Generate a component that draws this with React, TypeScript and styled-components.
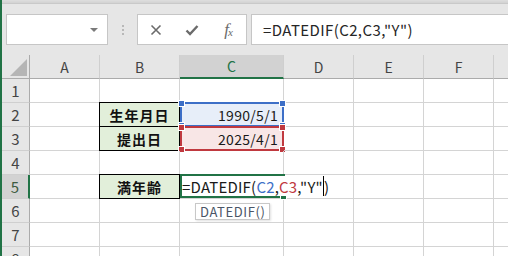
import React from 'react';
import styled, { createGlobalStyle, css } from 'styled-components';

const GlobalStyle = createGlobalStyle`
  html, body {
    margin: 0;
    padding: 0;
    background: #ffffff;
  }
  body {
    width: 508px;
    height: 256px;
    overflow: hidden;
    font-family: "Noto Sans CJK JP", "Noto Sans", sans-serif;
  }
`;

const EXCEL_GREEN = '#217346';
const GRID_LINE = '#d4d4d4';

const Page = styled.div`
  display: flex;
  flex-direction: column;
  height: 256px;
  box-sizing: border-box;
  border-left: 2px solid ${EXCEL_GREEN};
  background: #e6e6e6;
  overflow: hidden;
`;

const Toolbar = styled.div`
  height: 55px;
  flex-shrink: 0;
`;

const TopShade = styled.div`
  height: 3px;
  background: linear-gradient(#dedede, #d2d2d2);
  border-bottom: 1px solid #c9c9c9;
`;

const BarRow = styled.div`
  display: flex;
  align-items: center;
  margin-top: 10px;
  padding-left: 4px;
  height: 31px;
`;

const NameBox = styled.div`
  width: 102px;
  height: 31px;
  box-sizing: border-box;
  background: #ffffff;
  border: 1px solid #c6c6c6;
  display: flex;
  align-items: center;
  justify-content: flex-end;
  padding-right: 9px;
`;

const DropCaret = styled.span`
  width: 0;
  height: 0;
  border-left: 4px solid transparent;
  border-right: 4px solid transparent;
  border-top: 4px solid #7a7a7a;
`;

const Grip = styled.div`
  display: flex;
  flex-direction: column;
  gap: 2px;
  margin: 0 13px 0 14px;
`;

const GripDot = styled.span`
  width: 2px;
  height: 2px;
  background: #b8b8b8;
`;

const FxBox = styled.div`
  width: 110px;
  height: 31px;
  box-sizing: border-box;
  background: #ffffff;
  border: 1px solid #c6c6c6;
  display: grid;
  grid-template-columns: repeat(3, 36px);
  align-items: center;
  justify-items: center;
`;

const FxLabel = styled.span`
  font-family: "Liberation Serif", serif;
  font-style: italic;
  font-size: 17px;
  line-height: 1;
  color: #6b6b6b;
  letter-spacing: -1px;

  sub {
    font-size: 11px;
    vertical-align: -1px;
  }
`;

const FormulaInput = styled.div`
  flex: 1;
  height: 31px;
  margin-left: 4px;
  box-sizing: border-box;
  background: #ffffff;
  border: 1px solid #c6c6c6;
  border-right: none;
  display: flex;
  align-items: center;
  padding-left: 11px;
  font-size: 15px;
  letter-spacing: 0.4px;
  color: #262626;
  white-space: nowrap;
`;

const Sheet = styled.div`
  display: grid;
  grid-template-columns: 28px 70px 80px 104px 70px 70px 70px 70px;
  grid-auto-rows: 24px;
  background: #ffffff;
`;

const Corner = styled.div`
  position: relative;
  background: #e6e6e6;
  border-right: 1px solid #ababab;
  border-bottom: 1px solid #ababab;

  &::after {
    content: '';
    position: absolute;
    right: 2px;
    bottom: 2px;
    width: 0;
    height: 0;
    border-left: 17px solid transparent;
    border-bottom: 17px solid #b5b5b5;
  }
`;

const ColHead = styled.div<{ $active?: boolean }>`
  display: flex;
  align-items: center;
  justify-content: center;
  font-size: 14px;
  color: #444444;
  background: #e6e6e6;
  border-right: 1px solid #cfcfcf;
  border-bottom: 1px solid #ababab;
  box-sizing: border-box;
  ${(p) =>
    p.$active &&
    css`
      background: #d2d2d2;
      color: ${EXCEL_GREEN};
      border-bottom: 2px solid ${EXCEL_GREEN};
    `}
`;

const RowHead = styled.div<{ $active?: boolean }>`
  display: flex;
  align-items: center;
  justify-content: center;
  font-size: 15px;
  color: #444444;
  background: #e6e6e6;
  border-right: 1px solid #ababab;
  border-bottom: 1px solid #cfcfcf;
  box-sizing: border-box;
  ${(p) =>
    p.$active &&
    css`
      background: #d2d2d2;
      color: #3c5a40;
      border-right: 2px solid ${EXCEL_GREEN};
    `}
`;

const Cell = styled.div`
  position: relative;
  box-sizing: border-box;
  border-right: 1px solid ${GRID_LINE};
  border-bottom: 1px solid ${GRID_LINE};
  font-size: 14px;
  color: #1a1a1a;
`;

const LabelCell = styled(Cell)`
  display: flex;
  align-items: center;
  justify-content: center;
  background: #e2efda;
  font-weight: bold;
  font-size: 14px;
  color: #111111;
  letter-spacing: 1px;

  &::after {
    content: '';
    position: absolute;
    top: -1px;
    left: -1px;
    right: -1px;
    bottom: -1px;
    border: 1px solid #000000;
  }
`;

const ValueCell = styled(Cell)<{ $bg: string }>`
  display: flex;
  align-items: center;
  justify-content: flex-end;
  padding-right: 5px;
  letter-spacing: 0.3px;
  background: ${(p) => p.$bg};
`;

const RefFrame = styled.div<{ $tone: string }>`
  position: absolute;
  top: -1px;
  left: 0;
  right: -1px;
  bottom: -1px;
  border: 2px solid ${(p) => p.$tone};
`;

const Handle = styled.span<{ $tone: string; $x: 'left' | 'right'; $y: 'top' | 'bottom' }>`
  position: absolute;
  width: 5px;
  height: 5px;
  background: ${(p) => p.$tone};
  border: 1px solid #ffffff;
  ${(p) => (p.$x === 'left' ? 'left: -4px;' : 'right: -4px;')}
  ${(p) => (p.$y === 'top' ? 'top: -4px;' : 'bottom: -4px;')}
`;

const EditFrame = styled.div`
  position: absolute;
  top: -1px;
  left: 0;
  right: -2px;
  bottom: 0;
  border: 2px solid ${EXCEL_GREEN};
  border-right: none;
  z-index: 2;
`;

const FillHandle = styled.span`
  position: absolute;
  right: -2px;
  bottom: -4px;
  width: 5px;
  height: 5px;
  background: ${EXCEL_GREEN};
  border: 1px solid #ffffff;
`;

const Editor = styled.div`
  position: absolute;
  top: 1px;
  left: 2px;
  width: 152px;
  height: 20px;
  background: #ffffff;
  display: flex;
  align-items: center;
  font-size: 15px;
  letter-spacing: 0.2px;
  color: #1a1a1a;
  white-space: nowrap;
  z-index: 3;
`;

const Ref = styled.span<{ $tone: string }>`
  color: ${(p) => p.$tone};
`;

const TextCaret = styled.span`
  display: inline-block;
  width: 1px;
  height: 20px;
  background: #000000;
  vertical-align: middle;
`;

const Tip = styled.div`
  position: absolute;
  left: 15px;
  top: 28px;
  width: 75px;
  height: 17px;
  box-sizing: border-box;
  background: #ffffff;
  border: 1px solid #c8c8c8;
  box-shadow: 1px 1px 2px rgba(0, 0, 0, 0.12);
  font-size: 13px;
  letter-spacing: 0.6px;
  line-height: 15px;
  padding-left: 4px;
  color: #4a5566;
  white-space: nowrap;
  overflow: hidden;
  z-index: 4;
`;

const COLS = ['A', 'B', 'C', 'D', 'E', 'F', 'G'];
const ROWS = [1, 2, 3, 4, 5, 6, 7, 8];

const BLUE = '#3d6fc7';
const RED = '#c0393f';

const labels: Record<number, string> = { 2: '生年月日', 3: '提出日', 5: '満年齢' };
const values: Record<number, { text: string; tone: string; bg: string }> = {
  2: { text: '1990/5/1', tone: BLUE, bg: '#e7eef9' },
  3: { text: '2025/4/1', tone: RED, bg: '#f8e6e6' },
};

const CloseIcon = () => (
  <svg width="12" height="12" viewBox="0 0 12 12">
    <path d="M1.5 1.5 L10.5 10.5 M10.5 1.5 L1.5 10.5" stroke="#6b6b6b" strokeWidth="1.6" fill="none" />
  </svg>
);

const CheckIcon = () => (
  <svg width="14" height="12" viewBox="0 0 14 12">
    <path d="M1.5 6.5 L5 10 L12.5 2" stroke="#6b6b6b" strokeWidth="2.4" fill="none" />
  </svg>
);

const FORMULA = '=DATEDIF(C2,C3,"Y")';

const renderCell = (row: number, col: string) => {
  const key = `${col}${row}`;
  if (col === 'B' && labels[row]) {
    return <LabelCell key={key}>{labels[row]}</LabelCell>;
  }
  if (col === 'C' && values[row]) {
    const v = values[row];
    return (
      <ValueCell key={key} $bg={v.bg}>
        {v.text}
        <RefFrame $tone={v.tone}>
          <Handle $tone={v.tone} $x="left" $y="top" />
          <Handle $tone={v.tone} $x="right" $y="top" />
          <Handle $tone={v.tone} $x="left" $y="bottom" />
          <Handle $tone={v.tone} $x="right" $y="bottom" />
        </RefFrame>
      </ValueCell>
    );
  }
  if (col === 'C' && row === 5) {
    return (
      <Cell key={key}>
        <EditFrame>
          <FillHandle />
        </EditFrame>
        <Editor>
          =DATEDIF(<Ref $tone={BLUE}>C2</Ref>,<Ref $tone={RED}>C3</Ref>,"Y"
          <TextCaret />)
        </Editor>
        <Tip>DATEDIF()</Tip>
      </Cell>
    );
  }
  return <Cell key={key} />;
};

const App: React.FC = () => {
  return (
    <>
      <GlobalStyle />
      <Page>
        <Toolbar>
          <TopShade />
          <BarRow>
            <NameBox>
              <DropCaret />
            </NameBox>
            <Grip>
              <GripDot />
              <GripDot />
              <GripDot />
            </Grip>
            <FxBox>
              <CloseIcon />
              <CheckIcon />
              <FxLabel>
                f<sub>x</sub>
              </FxLabel>
            </FxBox>
            <FormulaInput>{FORMULA}</FormulaInput>
          </BarRow>
        </Toolbar>
        <Sheet>
          <Corner />
          {COLS.map((c) => (
            <ColHead key={c} $active={c === 'C'}>
              {c}
            </ColHead>
          ))}
          {ROWS.map((r) => (
            <React.Fragment key={r}>
              <RowHead $active={r === 5}>{r}</RowHead>
              {COLS.map((c) => renderCell(r, c))}
            </React.Fragment>
          ))}
        </Sheet>
      </Page>
    </>
  );
};

export default App;
